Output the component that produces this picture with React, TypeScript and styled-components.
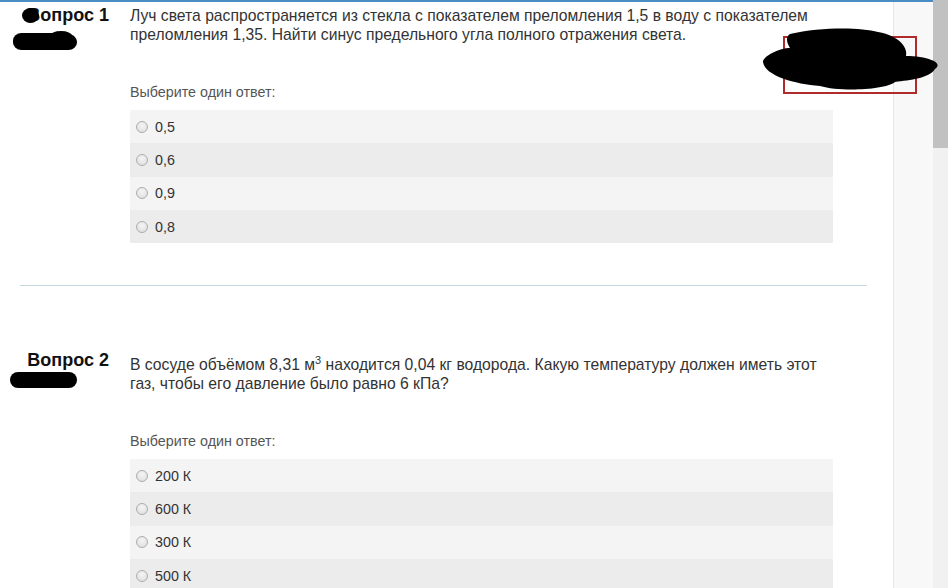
import React from "react";
import styled, { createGlobalStyle } from "styled-components";

const Global = createGlobalStyle`
  html, body { margin: 0; padding: 0; background: #ffffff; overflow: hidden; }
  body { font-family: "Liberation Sans", Arial, sans-serif; }
  #root { width: 948px; height: 588px; }
`;

const Frame = styled.div`
  position: relative;
  display: flex;
  width: 948px;
  height: 588px;
  overflow: hidden;
`;

const Window = styled.div`
  display: flex;
  flex-direction: column;
  width: 933px;
  height: 100%;
`;

const TopLine = styled.div`
  height: 2px;
  background: #4b8cc4;
  flex: none;
`;

const Body = styled.div`
  display: flex;
  flex: 1;
  min-height: 0;
`;

const Main = styled.div`
  width: 893px;
  background: #ffffff;
  border-right: 1px solid #e4e6e8;
  display: flex;
  flex-direction: column;
`;

const Side = styled.div`
  flex: 1;
  background: #f8f8f8;
`;

const Scrollbar = styled.div`
  width: 15px;
  background: #f1f1f1;
  display: flex;
  flex-direction: column;
`;

const Thumb = styled.div`
  height: 148px;
  background: #c1c1c1;
`;

const Question = styled.div<{ $top: number }>`
  display: grid;
  grid-template-columns: 130px 703px;
  padding-top: ${(p) => p.$top}px;
`;

const Label = styled.div`
  position: relative;
  padding-right: 21px;
  text-align: right;
  font-weight: bold;
  font-size: 18px;
  line-height: 20px;
  color: #111;
`;

const Content = styled.div`
  display: flex;
  flex-direction: column;
`;

const QText = styled.div`
  font-size: 15.7px;
  line-height: 19px;
  color: #333;
  padding-top: 1px;
  sup { font-size: 11px; line-height: 19px; vertical-align: 6px; }
`;

const Prompt = styled.div`
  font-size: 14.3px;
  line-height: 18px;
  color: #555;
  margin-top: 39px;
  margin-bottom: 9px;
`;

const Options = styled.div`
  display: flex;
  flex-direction: column;
`;

const Option = styled.div<{ $alt: boolean }>`
  display: flex;
  align-items: center;
  height: 33.3px;
  padding-left: 6px;
  gap: 7px;
  background: ${(p) => (p.$alt ? "#ececec" : "#f4f4f4")};
  font-size: 14.3px;
  color: #333;
`;

const Radio = styled.span`
  width: 10px;
  height: 10px;
  border-radius: 50%;
  border: 1px solid #adadad;
  background: radial-gradient(circle at 50% 35%, #f4f4f4 0%, #dcdcdc 100%);
  flex: none;
`;

const Divider = styled.div`
  margin: 42px 0 0 20px;
  width: 847px;
  height: 0;
  border-top: 1px solid #c6d6de;
  flex: none;
`;

const Blot = styled.span<{ $l: number; $t: number; $w: number; $h: number; $r?: string }>`
  position: absolute;
  left: ${(p) => p.$l}px;
  top: ${(p) => p.$t}px;
  width: ${(p) => p.$w}px;
  height: ${(p) => p.$h}px;
  border-radius: ${(p) => p.$r ?? "50%"};
  background: #000;
`;

const FlagBox = styled.div`
  position: absolute;
  left: 783px;
  top: 36px;
  width: 130px;
  height: 54px;
  border: 2px solid #b02c2c;
`;

const Scribble = styled.svg`
  position: absolute;
  left: 760px;
  top: 26px;
  width: 188px;
  height: 68px;
`;

const q1 = ["0,5", "0,6", "0,9", "0,8"];
const q2 = ["200 К", "600 К", "300 К", "500 К"];

export default function App() {
  return (
    <>
      <Global />
      <Frame>
        <Window>
          <TopLine />
          <Body>
            <Main>
              <Question $top={3}>
                <Label>
                  Вопрос 1
                  <Blot $l={22} $t={3} $w={17} $h={15} />
                  <Blot $l={13} $t={28} $w={64} $h={17} $r="9px 12px 9px 9px / 8px 10px 8px 8px" />
                  <Blot $l={50} $t={26} $w={22} $h={10} />
                </Label>
                <Content>
                  <QText>
                    Луч света распространяется из стекла с показателем преломления 1,5 в воду с показателем
                    преломления 1,35. Найти синус предельного угла полного отражения света.
                  </QText>
                  <Prompt>Выберите один ответ:</Prompt>
                  <Options>
                    {q1.map((o, i) => (
                      <Option key={o} $alt={i % 2 === 1}>
                        <Radio />
                        {o}
                      </Option>
                    ))}
                  </Options>
                </Content>
              </Question>
              <Divider />
              <Question $top={64}>
                <Label>
                  Вопрос 2
                  <Blot $l={10} $t={22} $w={67} $h={16} $r="8px" />
                </Label>
                <Content>
                  <QText>
                    В сосуде объёмом 8,31 м<sup>3</sup> находится 0,04 кг водорода. Какую температуру должен иметь этот
                    газ, чтобы его давление было равно 6 кПа?
                  </QText>
                  <Prompt>Выберите один ответ:</Prompt>
                  <Options>
                    {q2.map((o, i) => (
                      <Option key={o} $alt={i % 2 === 1}>
                        <Radio />
                        {o}
                      </Option>
                    ))}
                  </Options>
                </Content>
              </Question>
            </Main>
            <Side />
          </Body>
        </Window>
        <Scrollbar>
          <Thumb />
        </Scrollbar>
        <FlagBox />
        <Scribble viewBox="0 0 188 68">
          <path
            d="M30 8 C60 1 100 1 118 6 C140 10 148 22 146 30 C165 30 185 36 175 43 C170 52 150 54 135 56 C125 64 80 66 60 60 C35 58 5 50 3 36 C3 30 20 22 30 22 C26 16 26 10 30 8 Z"
            fill="#000"
          />
        </Scribble>
      </Frame>
    </>
  );
}
